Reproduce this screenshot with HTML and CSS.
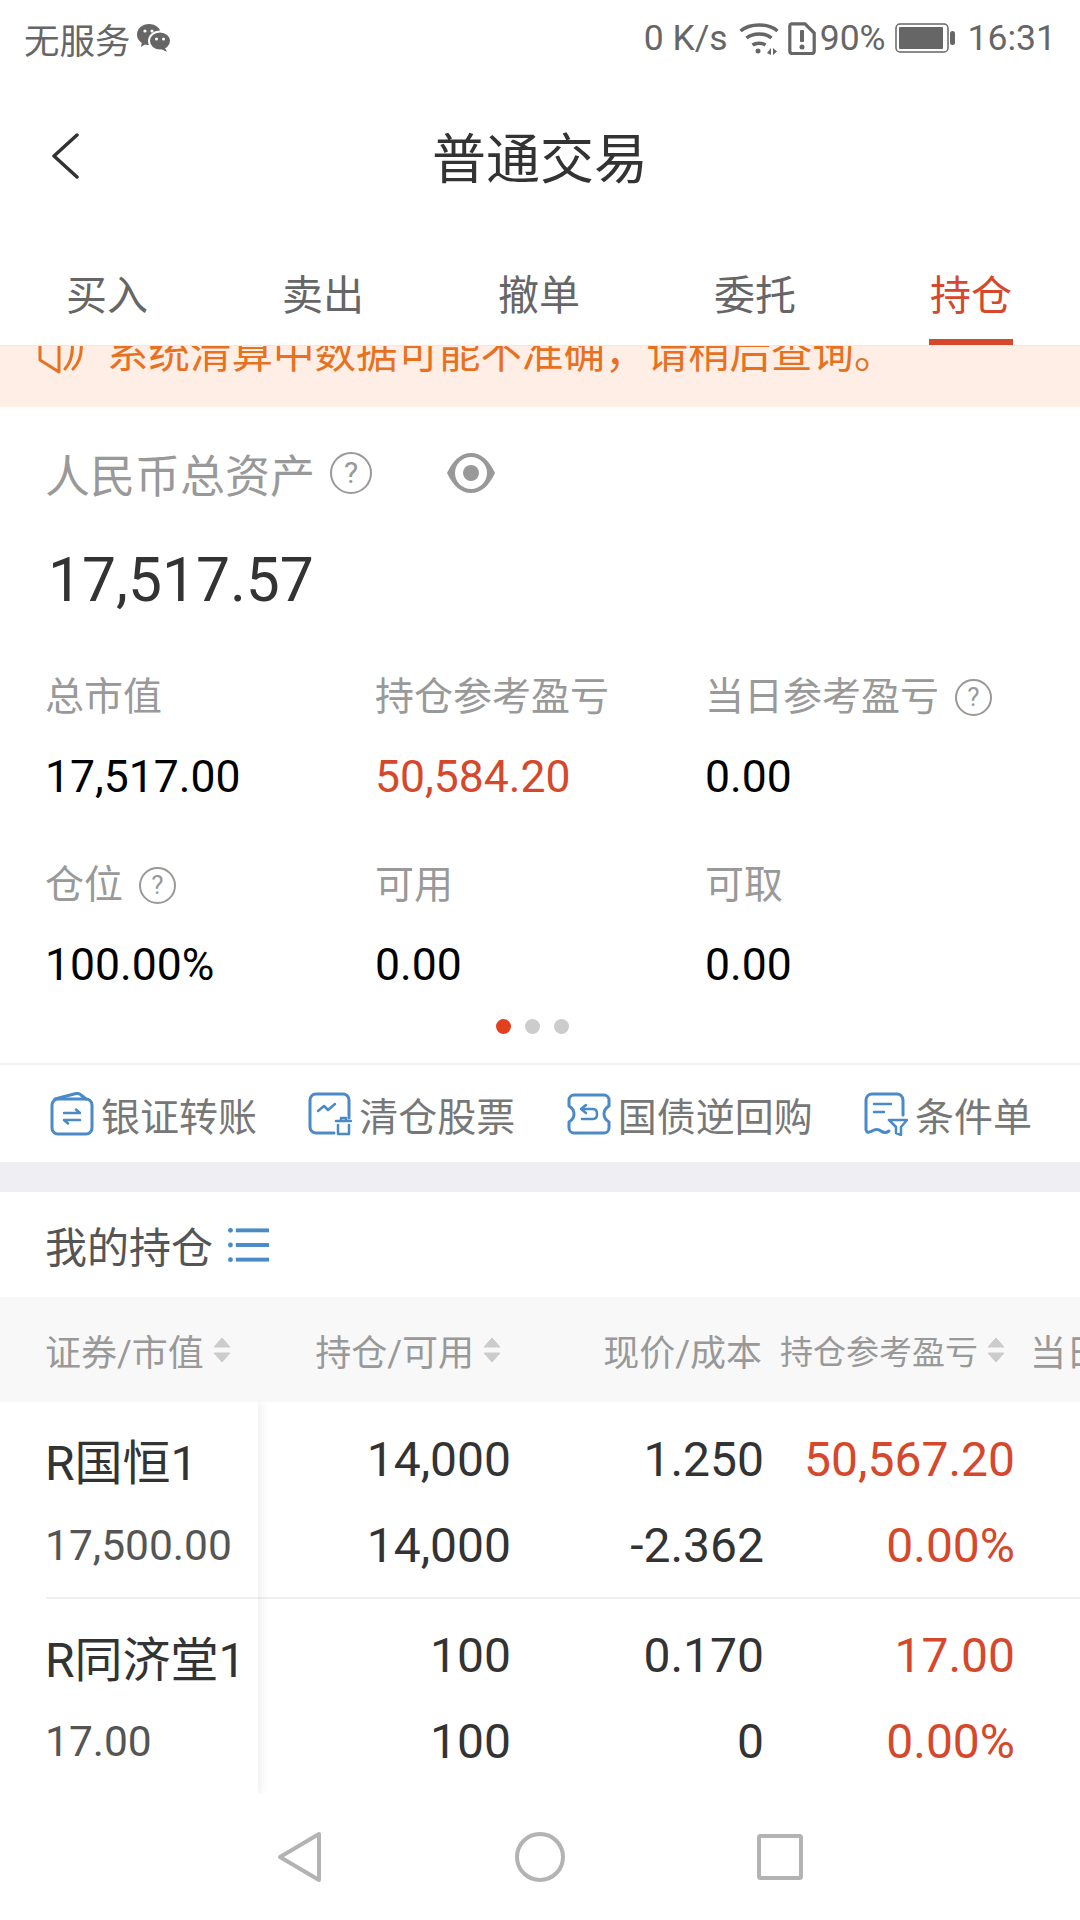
FILE: index.html
```html
<!DOCTYPE html>
<html lang="zh-CN">
<head>
	<meta charset="UTF-8">
	<title>普通交易</title>
	<link rel="stylesheet" href="styles.css">
</head>
<body>
	<div id="wrap">
		<!-- 状态栏 -->
		<div class="status">
			<div class="statusLeft">
				<span>无服务</span>
				<svg class="wechat" width="35" height="28" viewBox="0 0 35 28">
					<ellipse cx="13" cy="10.500" rx="12" ry="10.500" fill="#666"/>
					<path d="M6 17l-1 6 6-4z" fill="#666"/>
					<ellipse cx="24" cy="17" rx="11" ry="9.500" fill="#666" stroke="#fff" stroke-width="2"/>
					<path d="M29 24l2 4-6-3z" fill="#666"/>
					<circle cx="9" cy="7" r="1.600" fill="#fff"/>
					<circle cx="16" cy="7" r="1.600" fill="#fff"/>
					<circle cx="20.500" cy="15" r="1.500" fill="#fff"/>
					<circle cx="27.500" cy="15" r="1.500" fill="#fff"/>
				</svg>
			</div>
			<div class="statusRight">
				<span class="speed">0 K/s</span>
				<svg class="wifi" width="40" height="33" viewBox="0 0 40 33" fill="none" stroke="#666" stroke-width="3.500">
					<path d="M1.500 9C11 1 29 1 38.500 9"/>
					<path d="M7.500 16C14 10.500 26 10.500 32.500 16"/>
					<path d="M13.500 23C17 20.500 23 20.500 26.500 23"/>
					<circle cx="19" cy="29" r="2.500" fill="#666" stroke="none"/>
					<path d="M28 31l4-5v7zM34 26v7l4-3.500z" fill="#666" stroke="none"/>
				</svg>
				<svg class="sim" width="28" height="33" viewBox="0 0 28 33" fill="none">
					<path d="M3.500 1.800H17L26.200 11V29a2.500 2.500 0 0 1-2.500 2.500H4A2.500 2.500 0 0 1 1.800 29V4A2.500 2.500 0 0 1 3.500 1.800z" stroke="#666" stroke-width="3.200"/>
					<rect x="12" y="8" width="4" height="12" rx="1" fill="#666"/>
					<circle cx="14" cy="25" r="2.500" fill="#666"/>
				</svg>
				<span class="percent">90%</span>
				<svg class="battery" width="60" height="30" viewBox="0 0 60 30" fill="none">
					<rect x="1" y="1" width="52" height="28" rx="4" stroke="#666" stroke-width="1.500"/>
					<rect x="4" y="4" width="44" height="22" rx="1" fill="#666"/>
					<rect x="55" y="8" width="5" height="14" rx="2.500" fill="#666"/>
				</svg>
				<span class="time">16:31</span>
			</div>
		</div>

		<!-- 标题 -->
		<div class="titleBar">
			<svg class="back" width="28" height="46" viewBox="0 0 28 46" fill="none">
				<path d="M26 2L3 23l23 21" stroke="#333" stroke-width="3.500" stroke-linecap="round" stroke-linejoin="round"/>
			</svg>
			<h1>普通交易</h1>
		</div>

		<!-- 选项卡 -->
		<ul class="tabs">
			<li>买入</li>
			<li>卖出</li>
			<li>撤单</li>
			<li>委托</li>
			<li class="active">持仓</li>
		</ul>

		<!-- 滚动提示 -->
		<div class="notice">
			<div class="noticeText">
				<svg class="horn" width="46" height="44" viewBox="0 0 46 44" fill="none" stroke="#e8711f" stroke-width="3" stroke-linejoin="round" stroke-linecap="round">
					<path d="M2 10V29L21 41V2L10 10z"/>
					<path d="M34 10Q36 28 27 38"/>
					<path d="M43 10Q45 28 35 38"/>
				</svg>
				<span>系统清算中数据可能不准确，请稍后查询。</span>
			</div>
		</div>

		<!-- 总资产 -->
		<div class="assets">
			<div class="assetsTitle">
				<span>人民币总资产</span>
				<i class="help big">?</i>
				<svg class="eye" width="48" height="40" viewBox="0 0 48 40">
					<path d="M0 20C6 7 14 0 24 0S42 7 48 20C42 33 34 40 24 40S6 33 0 20z" fill="#999"/>
					<circle cx="24" cy="20" r="16" fill="#fff"/>
					<circle cx="24" cy="20" r="8" fill="#999"/>
				</svg>
			</div>
			<div class="assetsTotal">17,517.57</div>
			<div class="assetsGrid">
				<div class="cell">
					<div class="label">总市值</div>
					<div class="value">17,517.00</div>
				</div>
				<div class="cell">
					<div class="label">持仓参考盈亏</div>
					<div class="value red">50,584.20</div>
				</div>
				<div class="cell">
					<div class="label">当日参考盈亏<i class="help">?</i></div>
					<div class="value">0.00</div>
				</div>
				<div class="cell">
					<div class="label">仓位<i class="help">?</i></div>
					<div class="value">100.00%</div>
				</div>
				<div class="cell">
					<div class="label">可用</div>
					<div class="value">0.00</div>
				</div>
				<div class="cell">
					<div class="label">可取</div>
					<div class="value">0.00</div>
				</div>
			</div>
			<div class="dots">
				<span class="on"></span>
				<span></span>
				<span></span>
			</div>
		</div>

		<!-- 快捷入口 -->
		<div class="actions">
			<div class="action">
				<svg width="44" height="44" viewBox="0 0 44 44" fill="none" stroke="#4a8ac6" stroke-width="3" stroke-linejoin="round" stroke-linecap="round">
					<rect x="2" y="7" width="40" height="35" rx="6"/>
					<path d="M5 7L26 1.500Q29 1 31 3L36 7"/>
					<path d="M14 21H30L26 17.500M30 28H14L18 31.500" stroke-width="2.500"/>
				</svg>
				<span>银证转账</span>
			</div>
			<div class="action">
				<svg width="44" height="44" viewBox="0 0 44 44" fill="none" stroke="#4a8ac6" stroke-width="3" stroke-linejoin="round" stroke-linecap="round">
					<path d="M26 41H8a6 6 0 0 1-6-6V8a6 6 0 0 1 6-6H35a6 6 0 0 1 6 6V26"/>
					<path d="M10 19L16 14L20 18L27 12" stroke-width="2.500"/>
					<path d="M28 29H43M30 33V42H41V33M33 29V26H38V29" stroke-width="2.500"/>
				</svg>
				<span>清仓股票</span>
			</div>
			<div class="action">
				<svg width="44" height="44" viewBox="0 0 44 44" fill="none" stroke="#4a8ac6" stroke-width="3" stroke-linejoin="round" stroke-linecap="round">
					<path d="M7 3H37a5 5 0 0 1 5 5V14Q37 17 37 22T42 30V36a5 5 0 0 1-5 5H7a5 5 0 0 1-5-5V30Q7 27 7 22T2 14V8a5 5 0 0 1 5-5z"/>
					<path d="M19 13L14 17L19 21M15 17H26Q30 17 30 22T26 27H15" stroke-width="2.500"/>
				</svg>
				<span>国债逆回购</span>
			</div>
			<div class="action">
				<svg width="44" height="44" viewBox="0 0 44 44" fill="none" stroke="#4a8ac6" stroke-width="3" stroke-linejoin="round" stroke-linecap="round">
					<path d="M25 39Q21 42 17 39T8 39T2 38V8a6 6 0 0 1 6-6H33a6 6 0 0 1 6 6V23"/>
					<path d="M10 12H27M10 20H20" stroke-width="2.500"/>
					<path d="M25 28H43L37 35V43L32 41V35z" stroke-width="2.500"/>
				</svg>
				<span>条件单</span>
			</div>
		</div>

		<div class="gap"></div>

		<!-- 我的持仓 -->
		<div class="holdTitle">
			<span>我的持仓</span>
			<svg width="41" height="36" viewBox="0 0 42 36" fill="#4a8ac6">
				<circle cx="2.500" cy="3" r="2.500"/>
				<circle cx="2.500" cy="18" r="2.500"/>
				<circle cx="2.500" cy="33" r="2.500"/>
				<rect x="8" y="1" width="34" height="4"/>
				<rect x="8" y="16" width="34" height="4"/>
				<rect x="8" y="31" width="34" height="4"/>
			</svg>
		</div>

		<div class="tableHead">
			<div class="th first">证券/市值<svg class="sort" width="18" height="26" viewBox="0 0 18 26"><path d="M9 1l8 9H1zM1 16h16l-8 9z" fill="#ccc" stroke="#ccc" stroke-linejoin="round"/></svg></div>
			<div class="th second">持仓/可用<svg class="sort" width="18" height="26" viewBox="0 0 18 26"><path d="M9 1l8 9H1zM1 16h16l-8 9z" fill="#ccc" stroke="#ccc" stroke-linejoin="round"/></svg></div>
			<div class="th third">现价/成本</div>
			<div class="th fourth">持仓参考盈亏<svg class="sort" width="18" height="26" viewBox="0 0 18 26"><path d="M9 1l8 9H1zM1 16h16l-8 9z" fill="#ccc" stroke="#ccc" stroke-linejoin="round"/></svg></div>
			<div class="th fifth">当日参考盈亏</div>
		</div>

		<div class="tableBody">
			<div class="fixedCol">
				<div class="nameCell">
					<div class="stockName">R国恒1</div>
					<div class="stockValue">17,500.00</div>
				</div>
				<div class="nameCell second">
					<div class="stockName">R同济堂1</div>
					<div class="stockValue">17.00</div>
				</div>
			</div>
			<div class="rows">
				<div class="row">
					<div class="col qty"><div>14,000</div><div>14,000</div></div>
					<div class="col price"><div>1.250</div><div>-2.362</div></div>
					<div class="col profit red"><div>50,567.20</div><div>0.00%</div></div>
				</div>
				<div class="row second">
					<div class="col qty"><div>100</div><div>100</div></div>
					<div class="col price"><div>0.170</div><div>0</div></div>
					<div class="col profit red"><div>17.00</div><div>0.00%</div></div>
				</div>
			</div>
		</div>

		<!-- 系统导航 -->
		<div class="navBar">
			<svg width="46" height="52" viewBox="0 0 46 52" fill="none" stroke="#b3b3b3" stroke-width="4" stroke-linejoin="round">
				<path d="M42 3V49L3 26z"/>
			</svg>
			<svg width="50" height="50" viewBox="0 0 50 50" fill="none" stroke="#b3b3b3" stroke-width="4">
				<circle cx="25" cy="25" r="23"/>
			</svg>
			<svg width="46" height="46" viewBox="0 0 46 46" fill="none" stroke="#b3b3b3" stroke-width="4" stroke-linejoin="round">
				<rect x="2" y="2" width="42" height="42" rx="1.500"/>
			</svg>
		</div>
	</div>
</body>
</html>
```

FILE: styles.css
```css
* {
	box-sizing: border-box;
}
html,
body {
	margin: 0;
	padding: 0;
	background: #fff;
}
body {
	font-family: Roboto, "Noto Sans CJK SC", sans-serif;
	color: #333;
}
ul {
	list-style: none;
	margin: 0;
	padding: 0;
}
i {
	font-style: normal;
}
svg {
	display: block;
	flex: none;
}
#wrap {
	width: 1080px;
	height: 1920px;
	overflow: hidden;
	display: flex;
	flex-direction: column;
}
.red {
	color: #d6482c;
}

/* status bar */
.status {
	height: 76px;
	padding: 0 24px 0 24px;
	display: flex;
	justify-content: space-between;
	align-items: center;
	font-size: 35.5px;
	color: #666;
}
.statusLeft,
.statusRight {
	display: flex;
	align-items: center;
}
.wechat {
	margin-left: 5px;
}
.wifi {
	margin-left: 11px;
}
.sim {
	margin-left: 9px;
}
.percent {
	margin-left: 4px;
}
.battery {
	margin-left: 9px;
}
.time {
	margin-left: 13px;
}

/* title */
.titleBar {
	height: 160px;
	padding-left: 51px;
	display: flex;
	align-items: center;
	position: relative;
}
.titleBar h1 {
	flex: 1;
	margin: 0 0 2px;
	padding-right: 79px;
	text-align: center;
	font-size: 54px;
	font-weight: 400;
	color: #333;
}

/* tabs */
.tabs {
	height: 109px;
	padding: 0 67px 0 65px;
	display: flex;
	justify-content: space-between;
}
.tabs li {
	width: 84px;
	height: 109px;
	line-height: 120px;
	font-size: 41px;
	text-align: center;
	color: #666;
}
.tabs .active {
	color: #d6482c;
	border-bottom: 6px solid #d6482c;
}

/* notice */
.notice {
	height: 62px;
	overflow: hidden;
	background: #ffeee5;
	border-top: 1px solid #f3e7e0;
}
.noticeText {
	margin-top: -16px;
	padding-left: 38px;
	display: flex;
	align-items: center;
	font-size: 41.5px;
	line-height: 44px;
	color: #e8711f;
}
.noticeText span {
	margin-top: 2px;
}
.horn {
	margin-right: 23px;
}

/* assets */
.assets {
	height: 658px;
	padding: 40px 0 0 45px;
	border-bottom: 2px solid #f2f2f2;
	position: relative;
}
.assetsTitle {
	height: 52px;
	display: flex;
	align-items: center;
	font-size: 45px;
	color: #999;
}
.help {
	width: 37px;
	height: 37px;
	margin-left: 16px;
	border: 2px solid #999;
	border-radius: 50%;
	display: inline-block;
	line-height: 33px;
	text-align: center;
	font-size: 26px;
	color: #999;
}
.help.big {
	width: 42px;
	height: 42px;
	line-height: 38px;
	font-size: 30px;
	margin-left: 15px;
}
.eye {
	margin-left: 75px;
}
.assetsTotal {
	margin-top: 47px;
	padding-left: 3px;
	height: 70px;
	line-height: 70px;
	font-size: 60.5px;
	color: #333;
}
.assetsGrid {
	margin-top: 57px;
	display: grid;
	grid-template-columns: 330px 330px 1fr;
	row-gap: 59px;
}
.label {
	height: 48px;
	line-height: 48px;
	font-size: 39px;
	color: #999;
	display: flex;
	align-items: center;
}
.value {
	margin-top: 31px;
	height: 50px;
	line-height: 50px;
	font-size: 44.5px;
	color: #000;
}
.value.red {
	color: #d6482c;
}
.dots {
	margin-top: 29px;
	margin-left: 451px;
	display: flex;
	gap: 14px;
}
.dots span {
	width: 15px;
	height: 15px;
	border-radius: 50%;
	background: #ccc;
}
.dots .on {
	background: #e2401f;
}

/* shortcut row */
.actions {
	height: 97px;
	padding: 0 48px 0 50px;
	display: flex;
	justify-content: space-between;
	align-items: center;
	font-size: 39px;
	color: #777;
}
.action {
	display: flex;
	align-items: center;
	gap: 7px;
}
.gap {
	height: 30px;
	background: #eeeef3;
}

/* holdings */
.holdTitle {
	height: 105px;
	padding-left: 45px;
	display: flex;
	align-items: center;
	gap: 15px;
	font-size: 42px;
	color: #555;
}
.tableHead {
	height: 105px;
	background: #f8f8f8;
	display: flex;
	align-items: center;
	font-size: 36px;
	color: #999;
	white-space: nowrap;
}
.th {
	display: flex;
	align-items: center;
	flex: none;
	gap: 9px;
}
.th.first {
	width: 258px;
	padding-left: 45px;
}
.th.second {
	width: 243px;
	justify-content: flex-end;
}
.th.third {
	width: 261px;
	justify-content: flex-end;
}
.th.fourth {
	width: 243px;
	justify-content: flex-end;
	font-size: 33px;
}
.th.fifth {
	margin-left: 25px;
}
.tableBody {
	height: 392px;
	display: flex;
	overflow: hidden;
}
.fixedCol {
	width: 258px;
	flex: none;
	box-shadow: 4px 0 8px rgba(0, 0, 0, 0.06);
	position: relative;
	background: #fff;
}
.nameCell {
	height: 197px;
	margin-left: 46px;
	padding-top: 35px;
	border-bottom: 2px solid #f0f0f0;
}
.nameCell.second {
	height: 195px;
	border-bottom: none;
	padding-top: 35px;
}
.stockName {
	height: 54px;
	margin-left: -1px;
	line-height: 54px;
	font-size: 48px;
	color: #333;
	white-space: nowrap;
}
.stockValue {
	margin-top: 30px;
	margin-left: -1px;
	height: 50px;
	line-height: 50px;
	font-size: 42.5px;
	color: #555;
}
.nameCell.second .stockValue {
	margin-top: 29px;
}
.rows {
	flex: 1;
}
.row {
	height: 197px;
	padding-top: 31px;
	border-bottom: 2px solid #f0f0f0;
	display: flex;
	font-size: 48px;
	color: #333;
}
.row.second {
	height: 195px;
	padding-top: 30px;
	border-bottom: none;
}
.col {
	flex: none;
	text-align: right;
}
.col div {
	height: 54px;
	line-height: 54px;
}
.col div + div {
	margin-top: 32px;
}
.qty {
	width: 253px;
}
.price {
	width: 253px;
}
.profit {
	width: 251px;
	color: #d6482c;
}

/* android nav */
.navBar {
	flex: 1;
	padding: 0 277px;
	display: flex;
	justify-content: space-between;
	align-items: center;
}
```
